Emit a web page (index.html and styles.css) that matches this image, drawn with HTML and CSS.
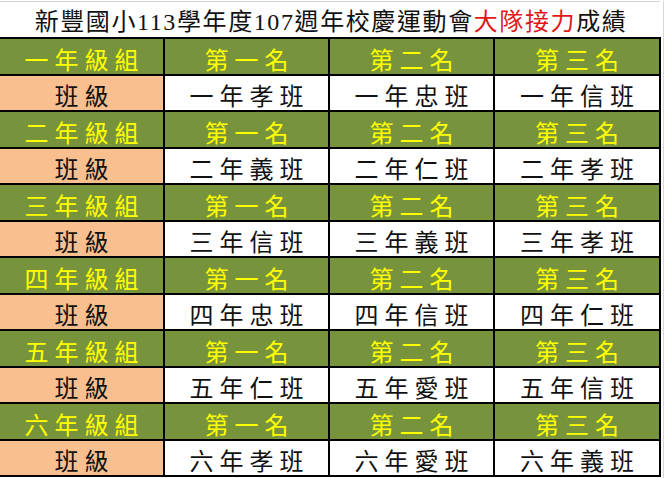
FILE: index.html
```html
<!DOCTYPE html>
<html lang="zh-Hant">
<head>
<meta charset="utf-8">
<title>大隊接力成績</title>
<link rel="stylesheet" href="styles.css">
</head>
<body>
<div class="sheet">
  <div class="title">新豐國小113學年度107週年校慶運動會<span class="red">大隊接力</span>成績</div>
  <div class="grid">
    <div class="cell hd">一年級組</div><div class="cell hd">第一名</div><div class="cell hd">第二名</div><div class="cell hd">第三名</div>
    <div class="cell lbl">班級</div><div class="cell val">一年孝班</div><div class="cell val">一年忠班</div><div class="cell val">一年信班</div>
    <div class="cell hd">二年級組</div><div class="cell hd">第一名</div><div class="cell hd">第二名</div><div class="cell hd">第三名</div>
    <div class="cell lbl">班級</div><div class="cell val">二年義班</div><div class="cell val">二年仁班</div><div class="cell val">二年孝班</div>
    <div class="cell hd">三年級組</div><div class="cell hd">第一名</div><div class="cell hd">第二名</div><div class="cell hd">第三名</div>
    <div class="cell lbl">班級</div><div class="cell val">三年信班</div><div class="cell val">三年義班</div><div class="cell val">三年孝班</div>
    <div class="cell hd">四年級組</div><div class="cell hd">第一名</div><div class="cell hd">第二名</div><div class="cell hd">第三名</div>
    <div class="cell lbl">班級</div><div class="cell val">四年忠班</div><div class="cell val">四年信班</div><div class="cell val">四年仁班</div>
    <div class="cell hd">五年級組</div><div class="cell hd">第一名</div><div class="cell hd">第二名</div><div class="cell hd">第三名</div>
    <div class="cell lbl">班級</div><div class="cell val">五年仁班</div><div class="cell val">五年愛班</div><div class="cell val">五年信班</div>
    <div class="cell hd">六年級組</div><div class="cell hd">第一名</div><div class="cell hd">第二名</div><div class="cell hd">第三名</div>
    <div class="cell lbl">班級</div><div class="cell val">六年孝班</div><div class="cell val">六年愛班</div><div class="cell val">六年義班</div>
  </div>
</div>
</body>
</html>
```

FILE: styles.css
```css
html, body {
  margin: 0;
  padding: 0;
  background: #ffffff;
}

body {
  width: 664px;
  height: 478px;
  overflow: hidden;
  font-family: "Liberation Serif", "Noto Sans CJK TC", serif;
}

.sheet {
  width: 663px;
  border-right: 1px solid #d6d6d6;
  height: 478px;
}

.title {
  box-sizing: border-box;
  height: 37px;
  margin-top: 1px;
  margin-bottom: -1px;
  border-top: 1px solid #d4d4d4;
  display: flex;
  align-items: flex-end;
  justify-content: center;
  padding: 0 0 3px 2px;
  font-size: 24px;
  line-height: 1.1;
  letter-spacing: 1.6px;
  color: #111111;
  width: 660px;
}

.red {
  color: #e01818;
}

.grid {
  margin-left: -2px;
  width: 663px;
  box-sizing: border-box;
  background: #000000;
  padding: 2px;
  display: grid;
  grid-template-columns: 163px 163px 163px 164px;
  grid-template-rows: repeat(6, 35px 34px);
  gap: 2px;
}

.cell {
  display: flex;
  align-items: flex-end;
  justify-content: center;
  padding: 0 0 1px 6px;
  font-size: 24px;
  line-height: 1.15;
  letter-spacing: 6px;
  font-family: "Noto Sans CJK TC", sans-serif;
  font-weight: 400;
}

.hd {
  background: #77933c;
  color: #ffff00;
}

.lbl {
  background: #f9bf8f;
  color: #111111;
}

.val {
  background: #ffffff;
  color: #111111;
}
```
